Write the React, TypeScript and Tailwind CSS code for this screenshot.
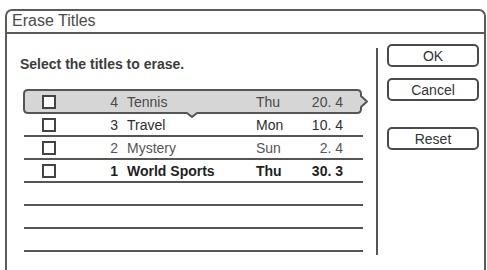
import React from "react";

interface TitleRow {
  no: number;
  name: string;
  day: string;
  date: string;
  color: string;
  bold?: boolean;
}

const titles: TitleRow[] = [
  { no: 4, name: "Tennis", day: "Thu", date: "20. 4", color: "text-[#4a4a4a]" },
  { no: 3, name: "Travel", day: "Mon", date: "10. 4", color: "text-[#2e2e2e]" },
  { no: 2, name: "Mystery", day: "Sun", date: "2. 4", color: "text-[#555555]" },
  { no: 1, name: "World Sports", day: "Thu", date: "30. 3", color: "text-[#1f1f1f]", bold: true },
];

function Checkbox() {
  return <div className="w-[14px] h-[14px] border-2 border-[#444] bg-white shrink-0" />;
}

function RowCells({ row }: { row: TitleRow }) {
  return (
    <div className={`flex items-center h-full pl-[18px] text-[14px] leading-[16px] ${row.color} ${row.bold ? "font-bold" : ""}`}>
      <Checkbox />
      <span className="w-[62px] text-right">{row.no}</span>
      <span className="ml-[9px] w-[129px] whitespace-nowrap">{row.name}</span>
      <span className="w-[44px]">{row.day}</span>
      <span className="w-[43px] text-right whitespace-pre">{row.date}</span>
    </div>
  );
}

// cursor shape around the selected row
function Highlight() {
  return (
    <svg className="absolute left-[-1px] top-0" width="348" height="30" viewBox="0 0 348 30">
      <path
        d="M5,1 H334 Q338,1 338,5 V7 L344,12.5 L338,18 V20 Q338,24 334,24 H174 L169,28 L164,24 H5 Q1,24 1,20 V5 Q1,1 5,1 Z"
        fill="#d6d6d6"
        stroke="#555"
        strokeWidth="2"
        strokeLinejoin="round"
      />
    </svg>
  );
}

function DialogButton({ label, className = "" }: { label: string; className?: string }) {
  return (
    <button
      className={`w-[92px] h-[23px] border-2 border-[#4a4a4a] rounded-[5px] bg-white text-[14px] leading-[16px] text-[#333] flex items-center justify-center ${className}`}
    >
      {label}
    </button>
  );
}

export default function App() {
  const [first, ...rest] = titles;

  return (
    <div className="w-[487px] h-[270px] overflow-hidden bg-white pt-[9px] font-['Liberation_Sans',Arial,sans-serif]">
      <div className="ml-[5px] w-[481px] h-[270px] border-2 border-b-0 border-[#5a5a5a] rounded-t-[7px]">
        <div className="h-[23px] border-b-2 border-[#5a5a5a] pl-[5px] text-[16px] leading-[20px] text-[#4a4a4a]">
          Erase Titles
        </div>

        <div className="flex">
          <div className="w-[369px] pl-[13px]">
            <p className="mt-[22px] text-[14px] leading-[16px] font-bold text-[#3c3c3c]">
              Select the titles to erase.
            </p>
            <div className="mt-[17px] ml-[4px] w-[339px]">
              <div className="relative h-[25px]">
                <Highlight />
                <div className="relative h-full">
                  <RowCells row={first} />
                </div>
              </div>
              {rest.map((row) => (
                <div key={row.no} className="h-[23px] border-b-2 border-[#555]">
                  <RowCells row={row} />
                </div>
              ))}
              {[0, 1, 2].map((i) => (
                <div key={i} className="h-[23px] border-b-2 border-[#555]" />
              ))}
            </div>
          </div>

          <div className="w-[2px] h-[207px] mt-[14px] bg-[#555]" />

          <div className="pl-[9px] pt-[10px] flex flex-col">
            <DialogButton label="OK" />
            <DialogButton label="Cancel" className="mt-[11px]" />
            <DialogButton label="Reset" className="mt-[26px]" />
          </div>
        </div>
      </div>
    </div>
  );
}
